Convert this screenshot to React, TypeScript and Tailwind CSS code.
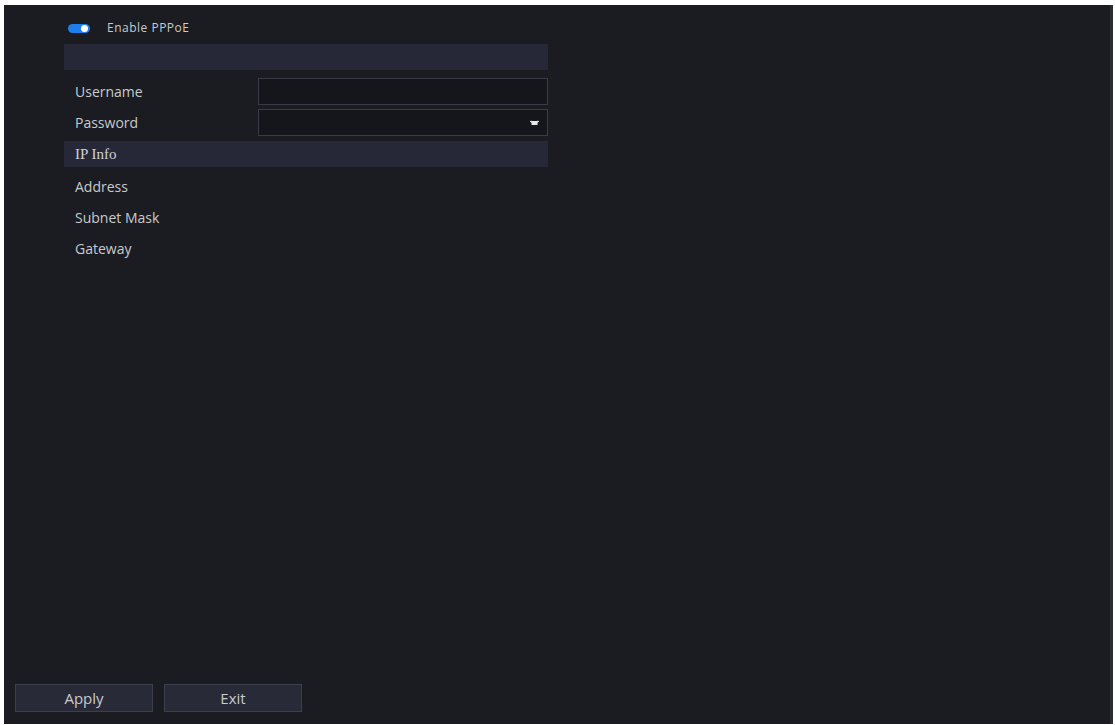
export default function App() {
  const font = { fontFamily: '"Open Sans", "Liberation Sans", sans-serif' };
  return (
    <div className="h-[725px] w-[1115px] bg-white pl-[4px] pt-[5px]" style={font}>
      <div className="flex h-[719px] w-[1109px] flex-col border-r-[3px] border-[#2c2d31] bg-[#1a1c21]">
        <div className="flex-1 pl-[60px] pt-[15px]">
          {/* Toggle */}
          <div className="flex h-[16px] items-center pl-[4px]">
            <div className="relative h-[9px] w-[22px] rounded-full bg-[#1f7fea]">
              <div className="absolute right-[2px] top-[1px] h-[7px] w-[7px] rounded-full bg-white" />
            </div>
            <span className="ml-[17px] text-[12px] tracking-[0.5px] text-[#c9cacd]">Enable PPPoE</span>
          </div>

          <div className="mt-[8px] w-[484px]">
            <div className="h-[26px] bg-[#262838]" />
            <div className="mt-[8px] flex h-[27px] items-center">
              <span className="w-[194px] pl-[11px] text-[14px] text-[#c9cacd]">Username</span>
              <div className="h-[27px] flex-1 border border-[#393b47] bg-[#15161c]" />
            </div>
            <div className="mt-[4px] flex h-[27px] items-center">
              <span className="w-[194px] pl-[11px] text-[14px] text-[#c9cacd]">Password</span>
              <div className="flex h-[27px] flex-1 items-center justify-end border border-[#393b47] bg-[#15161c] pr-[8px]">
                <svg width="9" height="6" viewBox="0 0 9 6">
                  <path d="M0.5 1 Q4.5 4.5 8.5 1" stroke="#e6e6e6" strokeWidth="1.6" fill="#e6e6e6" />
                  <rect x="1.5" y="2.5" width="6" height="2.5" fill="#e6e6e6" />
                </svg>
              </div>
            </div>
            <div className="mt-[5px] flex h-[26px] items-center bg-[#262838] pl-[11px]">
              <span className="text-[15px] text-[#d2d3d6]" style={{ fontFamily: '"Liberation Serif", serif' }}>
                IP Info
              </span>
            </div>
            <div className="flex h-[32px] items-center pl-[11px] pt-[6px] text-[14px] text-[#c9cacd]">Address</div>
            <div className="flex h-[31px] items-center pl-[11px] pt-[6px] text-[14px] text-[#c9cacd]">Subnet Mask</div>
            <div className="flex h-[31px] items-center pl-[11px] pt-[6px] text-[14px] text-[#c9cacd]">Gateway</div>
          </div>
        </div>

        {/* Buttons */}
        <div className="flex gap-[11px] pb-[12px] pl-[11px]">
          <button className="h-[28px] w-[138px] border border-[#3b3e4c] bg-[#282a38] text-[15px] text-[#c9cacd]">
            Apply
          </button>
          <button className="h-[28px] w-[138px] border border-[#3b3e4c] bg-[#282a38] text-[15px] text-[#c9cacd]">
            Exit
          </button>
        </div>
      </div>
    </div>
  );
}
